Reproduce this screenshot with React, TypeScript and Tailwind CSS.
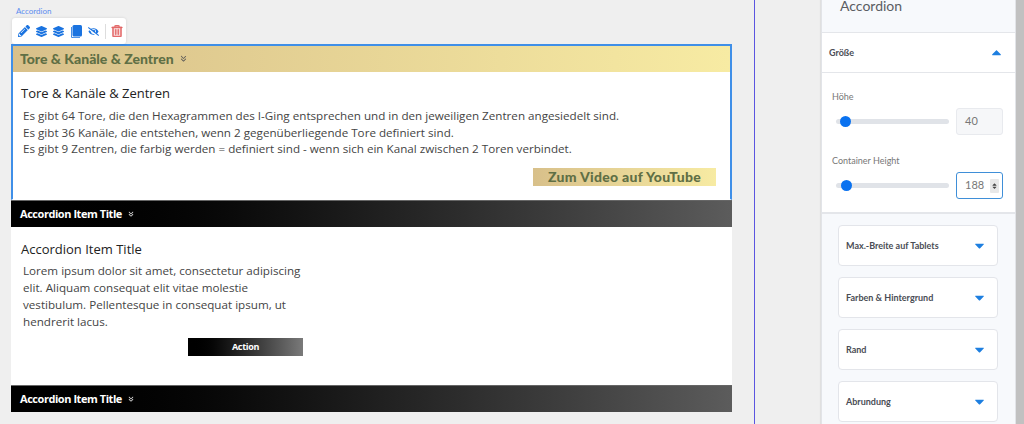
import { FaPencilAlt, FaLayerGroup, FaEyeSlash, FaRegTrashAlt, FaCaretUp, FaCaretDown } from 'react-icons/fa';
import { FaAnglesDown } from 'react-icons/fa6';

const muli = "font-['Lato',sans-serif]";
const openSans = "font-['Open_Sans',sans-serif]";

function AccordionHeader({ title }: { title: string }): React.ReactNode {
  return (
    <div className={`flex h-[27px] items-center gap-[6px] border-t border-[#666] bg-gradient-to-r from-black to-[#5c5c5c] pl-[9px] text-[11px] font-bold tracking-[-0.45px] text-white ${openSans}`}>
      {title}
      <FaAnglesDown className="size-[6px] text-[#ddd]" />
    </div>
  );
}

function Slider({ value, thumb, active }: { value: string; thumb: string; active?: boolean }): React.ReactNode {
  return (
    <div className="mt-[5px] ml-[4px] flex items-center gap-[7px]">
      <div className="relative h-[5px] w-[113px] rounded-full bg-[#e0e3e8]">
        <span className={`absolute top-[-3px] size-[11px] rounded-full bg-[#0a72f0] ${thumb}`} />
      </div>
      <div className={`flex h-[27px] w-[47px] items-center justify-between rounded-[3px] border pr-[3px] pl-[8px] text-[11px] text-[#777] ${active ? 'border-[#3f8fd8] bg-white' : 'border-[#e8eaee] bg-[#f6f7f9]'}`}>
        {value}
        {active && (
          <span className="flex h-[14px] w-[9px] flex-col items-center justify-center rounded-[1px] bg-[#e8e8e8] text-[#444]">
            <FaCaretUp className="-mb-[2px] size-[7px]" />
            <FaCaretDown className="-mt-[2px] size-[7px]" />
          </span>
        )}
      </div>
    </div>
  );
}

function SideCard({ label }: { label: string }): React.ReactNode {
  return (
    <div className="flex h-[41px] items-center justify-between rounded-[4px] border border-[#e3e5ea] bg-white pr-[10px] pl-[7px] text-[9px] font-bold text-[#4a4d55]">
      {label}
      <FaCaretDown className="size-[15px] text-[#1e7fe0]" />
    </div>
  );
}

export default function App(): React.ReactNode {
  return (
    <div className={`flex h-[424px] w-[1024px] overflow-hidden bg-[#efefef] ${muli}`}>
      <main className="relative w-[755px] shrink-0 border-r border-[#5b55e0] pt-[6px] pl-[11px]">
        <p className="pl-[5px] text-[8px] leading-[11px] text-[#5b8def]">Accordion</p>

        <div className="absolute top-[18px] left-[12px] z-10 flex h-[26px] w-[114px] items-center gap-[6px] rounded-[3px] bg-white pl-[6px] shadow-[0_0_3px_rgba(0,0,0,0.12)]">
          <FaPencilAlt className="size-[12px] text-[#1a73e0]" />
          <FaLayerGroup className="size-[11px] text-[#1a73e0]" />
          <FaLayerGroup className="size-[11px] text-[#1a73e0]" />
          <svg viewBox="0 0 12 13" className="h-[13px] w-[12px] fill-[#1a73e0]">
            <rect x="2.5" y="0" width="9.5" height="11.5" rx="1.5" />
            <path d="M1 2v9.5A1.5 1.5 0 0 0 2.5 13H10v-.8H2.8a1 1 0 0 1-1-1V2z" />
          </svg>
          <FaEyeSlash className="size-[11px] text-[#1a73e0]" />
          <span className="h-[15px] w-px bg-[#ddd]" />
          <FaRegTrashAlt className="-ml-px size-[12px] text-[#e46a6a] [stroke-width:25]" />
        </div>

        <div className="mt-[27px] w-[721px]">
          <section className="border-x-2 border-t-2 border-b border-[#3f8fe8] border-b-transparent bg-white">
            <div className="flex h-[26px] items-center gap-[6px] bg-gradient-to-r from-[#d8c08a] to-[#f7eba3] pb-[2px] pl-[7px] text-[14px] font-black text-[#5f6f45]">
              Tore &amp; Kanäle &amp; Zentren
              <FaAnglesDown className="size-[7px] text-[#555]" />
            </div>
            <div className={`h-[127px] pt-[13px] pr-[14px] pl-[8px] ${openSans}`}>
              <h3 className="text-[13px] leading-[17px] font-medium text-[#222]">Tore &amp; Kanäle &amp; Zentren</h3>
              <p className="mt-[6px] pl-[2px] text-[11.65px] leading-[16.5px] text-[#444]">
                Es gibt 64 Tore, die den Hexagrammen des I-Ging entsprechen und in den jeweiligen Zentren angesiedelt sind.
                <br />
                Es gibt 36 Kanäle, die entstehen, wenn 2 gegenüberliegende Tore definiert sind.
                <br />
                Es gibt 9 Zentren, die farbig werden = definiert sind - wenn sich ein Kanal zwischen 2 Toren verbindet.
              </p>
              <div className="mt-[10px] flex justify-end">
                <span className={`flex h-[18px] w-[183px] items-center justify-center bg-gradient-to-r from-[#d8c08a] to-[#f7eba3] text-[14px] font-black tracking-[0.3px] text-[#5f6f45] ${muli}`}>
                  Zum Video auf YouTube
                </span>
              </div>
            </div>
          </section>

          <AccordionHeader title="Accordion Item Title" />
          <section className={`h-[158px] bg-white pt-[14px] pl-[10px] ${openSans}`}>
            <h3 className="text-[13px] leading-[17px] font-medium text-[#222]">Accordion Item Title</h3>
            <p className="mt-[4px] w-[290px] pl-[2px] text-[11.65px] leading-[17px] text-[#444]">
              Lorem ipsum dolor sit amet, consectetur adipiscing elit. Aliquam consequat elit vitae molestie vestibulum. Pellentesque in consequat ipsum, ut hendrerit lacus.
            </p>
            <span className="mt-[8px] ml-[167px] flex h-[18px] w-[115px] items-center justify-center bg-gradient-to-r from-black to-[#7a7a7a] text-[9px] font-bold tracking-[-0.3px] text-white">
              Action
            </span>
          </section>
          <AccordionHeader title="Accordion Item Title" />
        </div>
      </main>

      <div className="w-[66px] shrink-0" />

      <aside className="flex w-[195px] shrink-0 flex-col border-x border-[#e2e4e8] bg-[#f7f9fc] shadow-[-1px_0_1px_rgba(0,0,0,0.06)]">
        <h2 className="h-[32px] pl-[18px] text-[14px] leading-[12px] text-[#5a5d63]">Accordion</h2>
        <div className="flex h-[41px] items-center justify-between border-y border-[#e4e6ea] bg-white pr-[11px] pl-[7px] text-[9px] font-bold text-[#4a4d55]">
          Größe
          <FaCaretUp className="size-[15px] text-[#1e7fe0]" />
        </div>
        <div className="h-[141px] border-b-2 border-[#e4e6ea] bg-white pt-[17px] pl-[10px] text-[9px] text-[#777]">
          <p className="leading-[13px]">Höhe</p>
          <Slider value="40" thumb="left-[4px]" />
          <p className="mt-[19px] leading-[13px]">Container Height</p>
          <Slider value="188" thumb="left-[5px]" active />
        </div>
        <div className="flex flex-col gap-[11px] pt-[11px] pr-[17px] pl-[16px]">
          <SideCard label="Max.-Breite auf Tablets" />
          <SideCard label="Farben & Hintergrund" />
          <SideCard label="Rand" />
          <SideCard label="Abrundung" />
        </div>
      </aside>

      <div className="flex-1 bg-[#c1c1c1]" />
    </div>
  );
}
